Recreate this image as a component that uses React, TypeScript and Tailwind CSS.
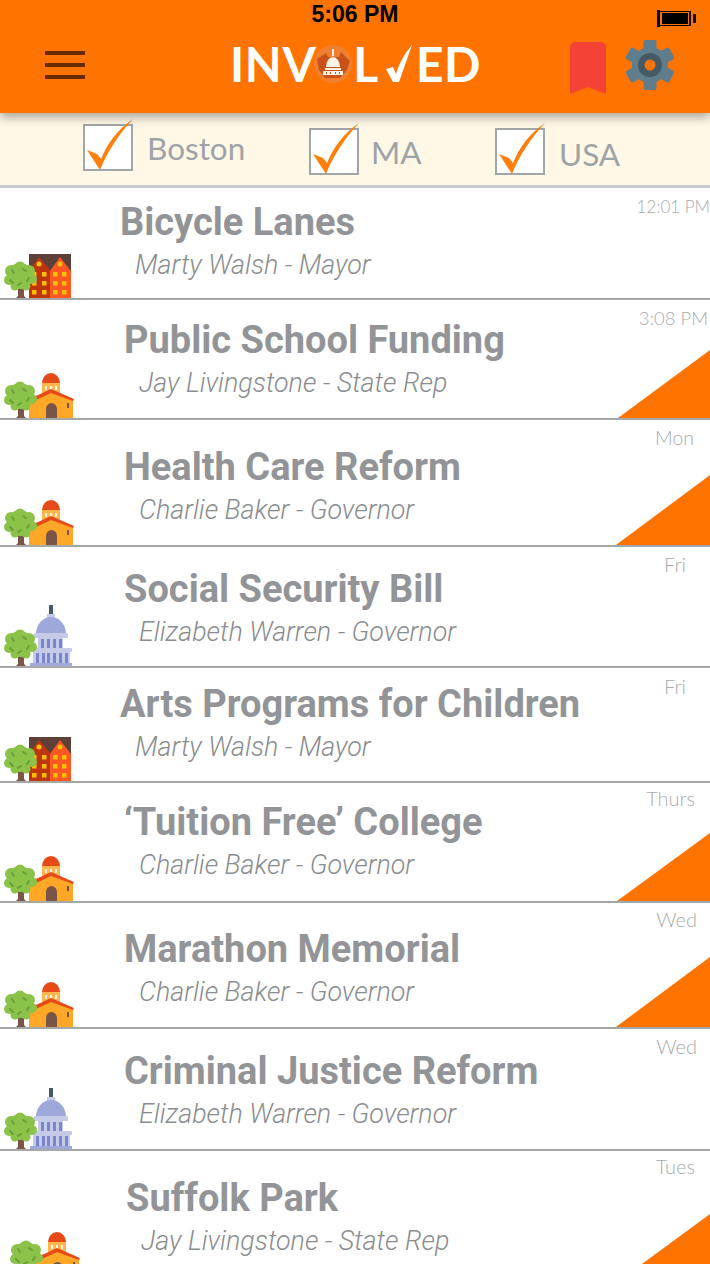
import React from 'react';

const Tree = () => (
  <g>
    <path d="M18 53h6v9l2 2h-10l2-2Z" fill="#795548" />
    <g fill="#8bc34a">
      <circle cx="20" cy="42" r="13" />
      <circle cx="11" cy="37" r="6" />
      <circle cx="20" cy="33" r="5.5" />
      <circle cx="29" cy="37" r="6" />
      <circle cx="32" cy="45" r="5" />
      <circle cx="9" cy="46" r="5" />
      <circle cx="15" cy="52" r="4.5" />
      <circle cx="26" cy="52" r="4.5" />
    </g>
    <g stroke="#689f38" strokeWidth="2" strokeLinecap="round" fill="none">
      <path d="M12 36l2 3" />
      <path d="M23 35l3 2" />
      <path d="M10 46l3 3" />
      <path d="M29 44l-2 3" />
      <path d="M21 49l-3 2" />
    </g>
  </g>
);

const CityIcon = () => (
  <svg width="80" height="64" viewBox="0 0 80 64" className="shrink-0">
    <rect x="29" y="20" width="42" height="18" fill="#5d4037" />
    <path d="M29 37 39 23 50 36V64H29Z" fill="#bf360c" />
    <path d="M50 37 60 23 71 37V64H50Z" fill="#ff5722" />
    <g fill="#ffc107">
      <circle cx="39" cy="30" r="2.5" />
      <circle cx="60" cy="30" r="2.5" />
      {[38, 47, 56].map((y) =>
        [32, 42, 53, 62].map((x) => <rect key={`${x}-${y}`} x={x} y={y} width="4.5" height="4.5" />)
      )}
    </g>
    <Tree />
  </svg>
);

const StateIcon = () => (
  <svg width="80" height="64" viewBox="0 0 80 64" className="shrink-0">
    <path d="M42 29a9 10 0 0 1 18 0Z" fill="#e64a19" />
    <rect x="42" y="29" width="18" height="10" fill="#ffb74d" />
    <g fill="#fff3e0">
      <rect x="45" y="32" width="2" height="4" />
      <rect x="50" y="32" width="2" height="4" />
      <rect x="55" y="32" width="2" height="4" />
    </g>
    <path d="M29 44 51 37 73 46V64H29Z" fill="#ffa726" />
    <path d="M34 43 51 35 74 45 73 47 51 39 36 46Z" fill="#e64a19" />
    <path d="M46 64V55a5.5 6 0 0 1 11 0V64Z" fill="#795548" />
    <rect x="67" y="49" width="2" height="5" fill="#795548" />
    <Tree />
  </svg>
);

const FederalIcon = () => (
  <svg width="80" height="64" viewBox="0 0 80 64" className="shrink-0">
    <rect x="49" y="3" width="4" height="9" fill="#455a64" />
    <rect x="47" y="12" width="8" height="6" fill="#c5cae9" />
    <path d="M36 32a15 17 0 0 1 30 0Z" fill="#9fa8da" />
    <rect x="34" y="31" width="34" height="5" rx="1" fill="#c5cae9" />
    <rect x="38" y="36" width="25" height="10" fill="#c5cae9" />
    {[41, 47, 53, 59].map((x) => (
      <rect key={x} x={x} y="37" width="3" height="9" fill="#7986cb" />
    ))}
    <rect x="31" y="46" width="41" height="4" rx="1" fill="#c5cae9" />
    <rect x="33" y="50" width="37" height="12" fill="#c5cae9" />
    {[36, 42, 47, 53, 59, 65].map((x) => (
      <rect key={x} x={x} y="51" width="3" height="10" fill="#7986cb" />
    ))}
    <rect x="30" y="61" width="42" height="3" fill="#9fa8da" />
    <Tree />
  </svg>
);

const Check = () => (
  <svg width="50" height="60" viewBox="0 -10 50 60" className="absolute left-0 top-[-10px] overflow-visible">
    <path d="M4 26 14 30 18 35C24 20 34 6 50 -5 36 10 24 28 17 46Z" fill="#ff7f0a" />
  </svg>
);

const Gear = () => (
  <svg width="50" height="50" viewBox="0 0 50 50">
    <g fill="#607d8b">
      <circle cx="25" cy="25" r="18" />
      {[0, 60, 120, 180, 240, 300].map((a) => (
        <rect key={a} x="18.5" y="0" width="13" height="11" rx="2" transform={`rotate(${a} 25 25)`} />
      ))}
    </g>
    <circle cx="25" cy="25" r="12" fill="#455a64" />
    <circle cx="25" cy="25" r="5.5" fill="#ff7300" />
  </svg>
);

const LogoDome = () => (
  <svg width="38" height="38" viewBox="0 0 38 38" className="mx-[-2px] shrink-0">
    <circle cx="19" cy="19" r="19" fill="#f08030" />
    <path d="M3 14 12 8 14 12H25L27 7 36 16 33 25 26 33H11L5 25Z" fill="#c9521a" />
    <g fill="#fff3e6">
      <rect x="18" y="4" width="2" height="7" />
      <path d="M12 22a7 10 0 0 1 14 0Z" />
      <rect x="11" y="23" width="16" height="2" />
      <rect x="9" y="26" width="20" height="4" />
    </g>
    <g fill="#c9521a">
      <rect x="12" y="27" width="1" height="2" />
      <rect x="16" y="27" width="1" height="2" />
      <rect x="21" y="27" width="1" height="2" />
      <rect x="25" y="27" width="1" height="2" />
    </g>
  </svg>
);

const Battery = () => (
  <svg width="39" height="17" viewBox="0 0 39 17" className="shrink-0">
    <rect x="0" y="0" width="3" height="17" fill="#000" />
    <rect x="3" y="1" width="30" height="1" fill="#000" />
    <rect x="3" y="15" width="30" height="1" fill="#000" />
    <rect x="5" y="3" width="26" height="11" fill="#000" />
    <rect x="32" y="1" width="2" height="15" fill="#000" />
    <rect x="36" y="4" width="3" height="9" rx="1" fill="#000" />
  </svg>
);

const filters = [
  { label: 'Boston', boxClass: 'ml-[83px] mt-[11px]', textClass: 'ml-[14px] mt-[14px] w-[162px]' },
  { label: 'MA', boxClass: 'mt-[15px]', textClass: 'ml-[12px] mt-[18px] w-[124px]' },
  { label: 'USA', boxClass: 'mt-[15px]', textClass: 'ml-[14px] mt-[20px]' },
];

const rows = [
  { title: 'Bicycle Lanes', who: 'Marty Walsh - Mayor', time: '12:01 PM', Icon: CityIcon, height: 'h-[112px]', left: 'w-[120px]', top: 'pt-[12px]', timeClass: 'pt-[8px] pr-0 text-[17px]', tri: '' },
  { title: 'Public School Funding', who: 'Jay Livingstone - State Rep', time: '3:08 PM', Icon: StateIcon, height: 'h-[120px]', left: 'w-[124px]', top: 'pt-[18px]', timeClass: 'pt-[7px] pr-[2px] text-[18.5px]', tri: 'w-[92px] h-[68px] bottom-0' },
  { title: 'Health Care Reform', who: 'Charlie Baker - Governor', time: 'Mon', Icon: StateIcon, height: 'h-[127px]', left: 'w-[124px]', top: 'pt-[25px]', timeClass: 'pt-[7px] pr-[16px] text-[19.5px]', tri: 'w-[94px] h-[70px] bottom-0' },
  { title: 'Social Security Bill', who: 'Elizabeth Warren - Governor', time: 'Fri', Icon: FederalIcon, height: 'h-[121px]', left: 'w-[124px]', top: 'pt-[20px]', timeClass: 'pt-[6px] pr-[24px] text-[20px]', tri: '' },
  { title: 'Arts Programs for Children', who: 'Marty Walsh - Mayor', time: 'Fri', Icon: CityIcon, height: 'h-[115px]', left: 'w-[120px]', top: 'pt-[14px]', timeClass: 'pt-[7px] pr-[24px] text-[20px]', tri: '' },
  { title: '‘Tuition Free’ College', who: 'Charlie Baker - Governor', time: 'Thurs', Icon: StateIcon, height: 'h-[120px]', left: 'w-[124px]', top: 'pt-[17px]', timeClass: 'pt-[4px] pr-[15px] text-[20px]', tri: 'w-[93px] h-[68px] bottom-0' },
  { title: 'Marathon Memorial', who: 'Charlie Baker - Governor', time: 'Wed', Icon: StateIcon, height: 'h-[126px]', left: 'w-[124px]', top: 'pt-[24px]', timeClass: 'pt-[5px] pr-[13px] text-[20px]', tri: 'w-[94px] h-[70px] bottom-0' },
  { title: 'Criminal Justice Reform', who: 'Elizabeth Warren - Governor', time: 'Wed', Icon: FederalIcon, height: 'h-[122px]', left: 'w-[124px]', top: 'pt-[20px]', timeClass: 'pt-[6px] pr-[13px] text-[20px]', tri: '' },
  { title: 'Suffolk Park', who: 'Jay Livingstone - State Rep', time: 'Tues', Icon: StateIcon, height: 'h-[126px]', left: 'w-[126px] pl-[6px] mb-[-2px]', top: 'pt-[25px]', timeClass: 'pt-[4px] pr-[15px] text-[20px]', tri: 'w-[83px] h-[61px] bottom-0' },
];

export default function App() {
  return (
    <div className="h-[1264px] w-[710px] overflow-hidden bg-white font-['Roboto',sans-serif]">
      <header className="relative z-10 h-[113px] bg-[#ff7300] shadow-[0_4px_10px_rgba(0,0,0,0.35)]">
        <div className="flex h-[28px] items-center justify-center font-['Liberation_Sans',sans-serif] text-[23px] font-bold text-black">
          5:06 PM
          <div className="absolute right-[14px] top-[10px]">
            <Battery />
          </div>
        </div>
        <div className="flex items-start pt-[12px]">
          <div className="ml-[45px] mt-[11px] flex w-[40px] flex-col gap-[8px]">
            <div className="h-[4px] bg-[#662c00]" />
            <div className="h-[4px] bg-[#662c00]" />
            <div className="h-[4px] bg-[#662c00]" />
          </div>
          <div className="ml-[145px] mt-[4px] flex h-[40px] w-[248px] items-center font-['Lato',sans-serif] text-[48px] font-bold leading-none tracking-[0.6px] text-white">
            <span>INV</span>
            <LogoDome />
            <span className="ml-[3px]">L</span>
            <svg width="26" height="38" viewBox="0 0 26 38" className="ml-[7px] mr-[4px] shrink-0">
              <path d="M0 24 7 22 10 29C13 19 18 9 26 0L13 37H7Z" fill="#fff" />
            </svg>
            <span>ED</span>
          </div>
          <svg width="36" height="54" viewBox="0 0 36 54" className="ml-[92px] mt-[1px] shrink-0">
            <path d="M0 6a5 5 0 0 1 5-5H31a5 5 0 0 1 5 5V53L18 46 0 53Z" fill="#f44336" />
          </svg>
          <div className="ml-[19px] shrink-0">
            <Gear />
          </div>
        </div>
      </header>

      <div className="flex h-[75px] items-start border-b-[3px] border-[#c8ccd0] bg-[#fff8e7]">
        {filters.map((f) => (
          <div key={f.label} className="flex items-start">
            <div className={`relative h-[47px] w-[50px] shrink-0 border-2 border-[#a3a6a9] bg-white ${f.boxClass}`}>
              <div className="absolute left-[-2px] top-[-2px]">
                <Check />
              </div>
            </div>
            <span className={`font-['Lato',sans-serif] text-[31.5px] font-normal leading-[42px] text-[#a0a3a6] ${f.textClass}`}>
              {f.label}
            </span>
          </div>
        ))}
      </div>

      {rows.map((row) => (
        <div key={row.title} className={`relative flex border-b-2 border-[#a5a7a9] ${row.height}`}>
          <div className={`flex shrink-0 items-end ${row.left}`}>
            <row.Icon />
          </div>
          <div className={`flex-1 whitespace-nowrap ${row.top}`}>
            <div className="text-[38px] font-bold leading-[44px] text-[#929497]">{row.title}</div>
            <div className="mt-[-1px] pl-[15px] text-[26.85px] font-light italic leading-[44px] text-[#8a8d90]">{row.who}</div>
          </div>
          <div className={`shrink-0 font-['Lato',sans-serif] font-light leading-[22px] text-[#a8abad] ${row.timeClass}`}>
            {row.time}
          </div>
          {row.tri && (
            <div className={`absolute right-0 bg-[#ff7300] [clip-path:polygon(100%_0,100%_100%,0_100%)] ${row.tri}`} />
          )}
        </div>
      ))}
    </div>
  );
}
